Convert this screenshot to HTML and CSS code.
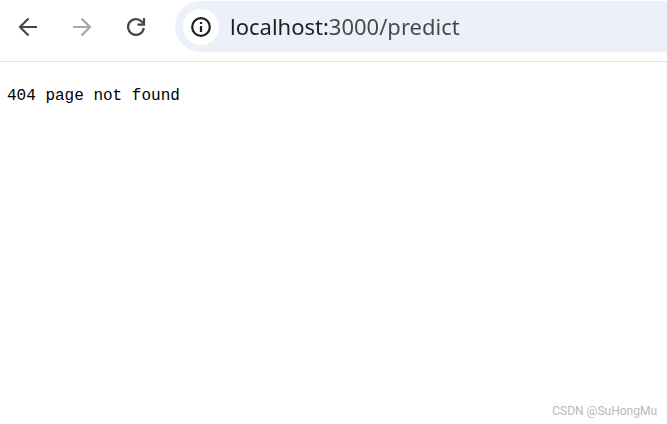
FILE: index.html
```html
<!DOCTYPE html>
<html lang="en">
<head>
<meta charset="utf-8">
<title>localhost:3000/predict</title>
<link rel="stylesheet" href="styles.css">
</head>
<body>
<header class="toolbar">
  <nav class="nav" aria-label="History">
    <button class="nav-button" type="button" aria-label="Back">
      <svg class="icon" viewBox="0 0 20 20"><path d="M19 10H2.500M10.500 1.500 2 10l8.500 8.500"/></svg>
    </button>
    <button class="nav-button" type="button" aria-label="Forward" disabled>
      <svg class="icon" viewBox="0 0 20 20"><path d="M1 10h16.500M9.500 1.500 18 10l-8.500 8.500"/></svg>
    </button>
    <button class="nav-button" type="button" aria-label="Reload">
      <svg class="icon" viewBox="0 0 20 20"><path d="M17.800 11A7.900 7.900 0 1 1 15.600 4.400L18 7M18 1v6.700h-6.500"/></svg>
    </button>
  </nav>
  <form class="address-bar">
    <button class="site-info" type="button" aria-label="View site information">
      <svg class="icon" viewBox="0 0 20 20"><circle cx="10" cy="10" r="8.800"/><path d="M10 9v6M10 5v2"/></svg>
    </button>
    <input class="address" type="text" aria-label="Address" value="localhost:3000/predict" spellcheck="false">
  </form>
</header>
<main class="page">
  <p class="message">404 page not found</p>
</main>
<footer class="credit">CSDN @SuHongMu</footer>
</body>
</html>
```
FILE: styles.css
```css
* {
  box-sizing: border-box;
}

body {
  margin: 0;
  min-height: 100vh;
  display: flex;
  flex-direction: column;
  background: #fff;
}

button {
  display: flex;
  align-items: center;
  justify-content: center;
  padding: 0;
  border: 0;
  border-radius: 50%;
  background: none;
  color: #474747;
}

button:disabled {
  color: #a8a8a8;
}

.icon {
  width: 20px;
  height: 20px;
  fill: none;
  stroke: currentColor;
  stroke-width: 2.2;
}

.toolbar {
  display: flex;
  align-items: center;
  gap: 19px;
  padding: 1px 0 9px 8px;
  border-bottom: 1px solid #e1e1e1;
}

.nav {
  display: flex;
  gap: 14px;
}

.nav-button {
  width: 40px;
  height: 40px;
}

.address-bar {
  flex: 1;
  display: flex;
  align-items: center;
  gap: 11px;
  height: 51px;
  padding-left: 8px;
  border-radius: 26px 0 0 26px;
  background: #ebf0f9;
}

.site-info {
  width: 36px;
  height: 36px;
  background: #fff;
  color: #1f1f1f;
}

.address {
  flex: 1;
  min-width: 0;
  padding: 0 0 2px;
  border: 0;
  outline: 0;
  font: 22px/32px "Noto Sans", "Open Sans", sans-serif;
  color: transparent;
  caret-color: #1f1f1f;
  background: linear-gradient(to right, #1f1f1f 98px, #474747 98px);
  -webkit-background-clip: text;
  background-clip: text;
}

.page {
  flex: 1;
  padding: 22px 7px;
}

.message {
  margin: 0;
  font: 16px/24px "Liberation Mono", monospace;
  color: #000;
}

.credit {
  padding: 0 10px 5px;
  font: 12px/16px Roboto, sans-serif;
  text-align: right;
  color: #b8b8b8;
}
```
